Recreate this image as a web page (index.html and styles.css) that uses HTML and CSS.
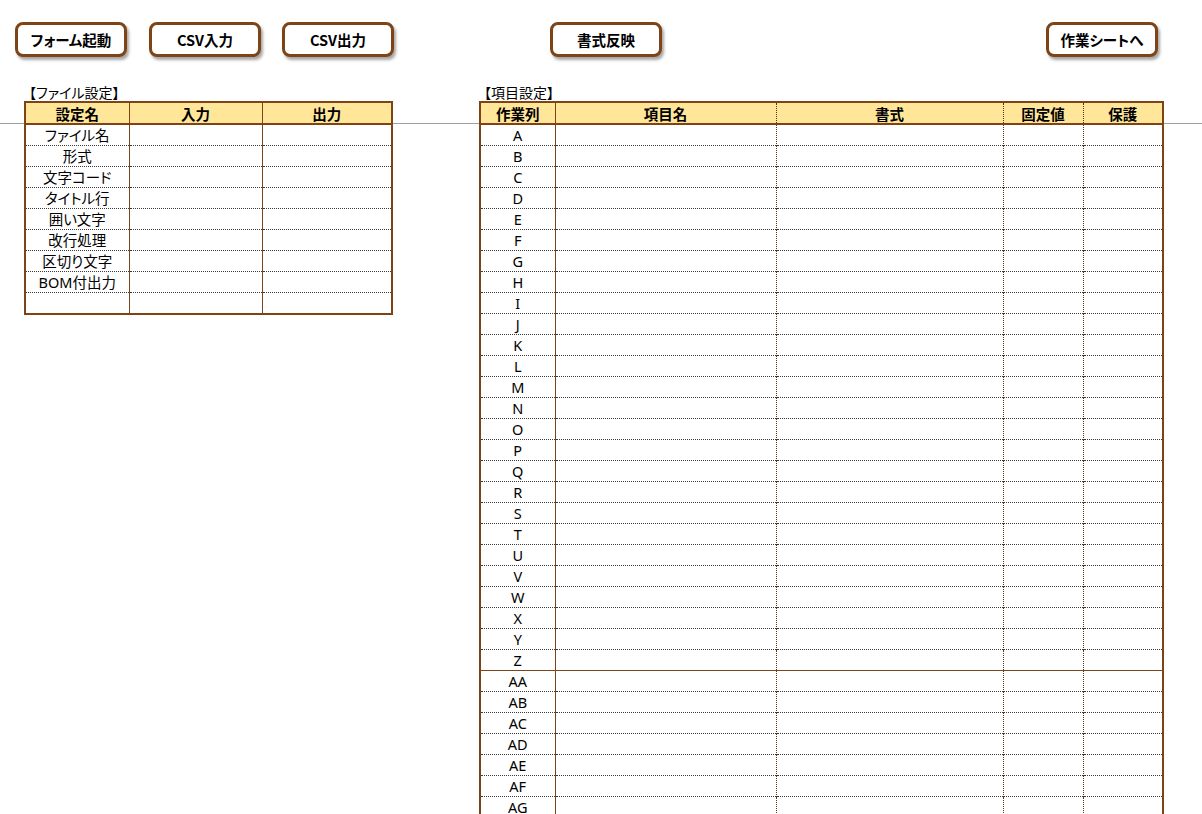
FILE: index.html
```html
<!DOCTYPE html>
<html lang="ja">
<head>
    <meta charset="UTF-8">
    <meta name="viewport" content="width=device-width, initial-scale=1.0">
    <title>CSV設定</title>
    <link rel="stylesheet" href="styles.css">
</head>
<body>
    <div class="toolbar">
        <div class="sheet-button">フォーム起動</div>
        <div class="sheet-button csv-in">CSV入力</div>
        <div class="sheet-button csv-out">CSV出力</div>
        <div class="sheet-button apply">書式反映</div>
        <div class="sheet-button work">作業シートへ</div>
    </div>

    <div class="sheet">
        <div class="block">
            <div class="caption">【ファイル設定】</div>
            <table class="grid file-table">
                <colgroup>
                    <col class="c-name">
                    <col class="c-in">
                    <col class="c-out">
                </colgroup>
                <tr><th>設定名</th><th class="solid">入力</th><th class="solid">出力</th></tr>
                <tr><td>ファイル名</td><td class="solid"></td><td class="solid"></td></tr>
                <tr><td>形式</td><td class="solid"></td><td class="solid"></td></tr>
                <tr><td>文字コード</td><td class="solid"></td><td class="solid"></td></tr>
                <tr><td>タイトル行</td><td class="solid"></td><td class="solid"></td></tr>
                <tr><td>囲い文字</td><td class="solid"></td><td class="solid"></td></tr>
                <tr><td>改行処理</td><td class="solid"></td><td class="solid"></td></tr>
                <tr><td>区切り文字</td><td class="solid"></td><td class="solid"></td></tr>
                <tr><td>BOM付出力</td><td class="solid"></td><td class="solid"></td></tr>
                <tr><td></td><td class="solid"></td><td class="solid"></td></tr>
            </table>
        </div>

        <div class="block">
            <div class="caption">【項目設定】</div>
            <table class="grid item-table">
                <colgroup>
                    <col class="c-col">
                    <col class="c-item">
                    <col class="c-format">
                    <col class="c-fixed">
                    <col class="c-lock">
                </colgroup>
                <tr><th>作業列</th><th class="solid">項目名</th><th class="dot">書式</th><th class="dot">固定値</th><th class="dot">保護</th></tr>
                <tr><td>A</td><td class="solid"></td><td class="dot"></td><td class="dot"></td><td class="dot"></td></tr>
                <tr><td>B</td><td class="solid"></td><td class="dot"></td><td class="dot"></td><td class="dot"></td></tr>
                <tr><td>C</td><td class="solid"></td><td class="dot"></td><td class="dot"></td><td class="dot"></td></tr>
                <tr><td>D</td><td class="solid"></td><td class="dot"></td><td class="dot"></td><td class="dot"></td></tr>
                <tr><td>E</td><td class="solid"></td><td class="dot"></td><td class="dot"></td><td class="dot"></td></tr>
                <tr><td>F</td><td class="solid"></td><td class="dot"></td><td class="dot"></td><td class="dot"></td></tr>
                <tr><td>G</td><td class="solid"></td><td class="dot"></td><td class="dot"></td><td class="dot"></td></tr>
                <tr><td>H</td><td class="solid"></td><td class="dot"></td><td class="dot"></td><td class="dot"></td></tr>
                <tr><td>I</td><td class="solid"></td><td class="dot"></td><td class="dot"></td><td class="dot"></td></tr>
                <tr><td>J</td><td class="solid"></td><td class="dot"></td><td class="dot"></td><td class="dot"></td></tr>
                <tr><td>K</td><td class="solid"></td><td class="dot"></td><td class="dot"></td><td class="dot"></td></tr>
                <tr><td>L</td><td class="solid"></td><td class="dot"></td><td class="dot"></td><td class="dot"></td></tr>
                <tr><td>M</td><td class="solid"></td><td class="dot"></td><td class="dot"></td><td class="dot"></td></tr>
                <tr><td>N</td><td class="solid"></td><td class="dot"></td><td class="dot"></td><td class="dot"></td></tr>
                <tr><td>O</td><td class="solid"></td><td class="dot"></td><td class="dot"></td><td class="dot"></td></tr>
                <tr><td>P</td><td class="solid"></td><td class="dot"></td><td class="dot"></td><td class="dot"></td></tr>
                <tr><td>Q</td><td class="solid"></td><td class="dot"></td><td class="dot"></td><td class="dot"></td></tr>
                <tr><td>R</td><td class="solid"></td><td class="dot"></td><td class="dot"></td><td class="dot"></td></tr>
                <tr><td>S</td><td class="solid"></td><td class="dot"></td><td class="dot"></td><td class="dot"></td></tr>
                <tr><td>T</td><td class="solid"></td><td class="dot"></td><td class="dot"></td><td class="dot"></td></tr>
                <tr><td>U</td><td class="solid"></td><td class="dot"></td><td class="dot"></td><td class="dot"></td></tr>
                <tr><td>V</td><td class="solid"></td><td class="dot"></td><td class="dot"></td><td class="dot"></td></tr>
                <tr><td>W</td><td class="solid"></td><td class="dot"></td><td class="dot"></td><td class="dot"></td></tr>
                <tr><td>X</td><td class="solid"></td><td class="dot"></td><td class="dot"></td><td class="dot"></td></tr>
                <tr><td>Y</td><td class="solid"></td><td class="dot"></td><td class="dot"></td><td class="dot"></td></tr>
                <tr><td>Z</td><td class="solid"></td><td class="dot"></td><td class="dot"></td><td class="dot"></td></tr>
                <tr class="group-start"><td>AA</td><td class="solid"></td><td class="dot"></td><td class="dot"></td><td class="dot"></td></tr>
                <tr><td>AB</td><td class="solid"></td><td class="dot"></td><td class="dot"></td><td class="dot"></td></tr>
                <tr><td>AC</td><td class="solid"></td><td class="dot"></td><td class="dot"></td><td class="dot"></td></tr>
                <tr><td>AD</td><td class="solid"></td><td class="dot"></td><td class="dot"></td><td class="dot"></td></tr>
                <tr><td>AE</td><td class="solid"></td><td class="dot"></td><td class="dot"></td><td class="dot"></td></tr>
                <tr><td>AF</td><td class="solid"></td><td class="dot"></td><td class="dot"></td><td class="dot"></td></tr>
                <tr><td>AG</td><td class="solid"></td><td class="dot"></td><td class="dot"></td><td class="dot"></td></tr>
            </table>
        </div>
    </div>
</body>
</html>
```

FILE: styles.css
```css
html, body {
    overflow: hidden;
}
body {
    margin: 0;
    font-family: "Noto Sans", "Noto Sans CJK JP", sans-serif;
    font-size: 15px;
    color: #000000;
    font-feature-settings: "palt";
    /* frozen pane divider */
    background: #ffffff linear-gradient(#a0a0a0, #a0a0a0) 0 123px / 100% 1px no-repeat;
}
.toolbar {
    display: flex;
    padding: 22px 0 0 15px;
}
.sheet-button {
    width: 112px;
    height: 35px;
    box-sizing: border-box;
    border: 3px solid #7e4416;
    border-radius: 8px;
    background: #ffffff;
    box-shadow: 2px 3px 3px rgba(0, 0, 0, 0.35);
    display: flex;
    align-items: center;
    justify-content: center;
    font-family: "Noto Sans CJK JP", sans-serif;
    font-weight: bold;
    font-size: 14.5px;
}
.csv-in { margin-left: 22px; }
.csv-out { margin-left: 21px; }
.apply { margin-left: 156px; }
.work { margin-left: 384px; }
.sheet {
    display: flex;
    align-items: flex-start;
    padding: 26px 0 0 24px;
    gap: 86px;
}
.caption {
    font-family: "Noto Sans CJK JP", sans-serif;
    font-size: 14px;
    line-height: 18px;
    height: 18px;
    padding-left: 5px;
}
.grid {
    border-collapse: collapse;
    table-layout: fixed;
    border: 2px solid #7e4416;
    background: #ffffff;
}
.grid th {
    background: #ffe699;
    font-family: "Noto Sans CJK JP", sans-serif;
    font-weight: bold;
    font-size: 14.5px;
    height: 20px;
    line-height: 19px;
    padding: 0;
    border-bottom: 2px solid #7e4416;
}
.grid td {
    height: 20px;
    line-height: 19px;
    padding: 0;
    text-align: center;
    font-size: 14.5px;
    border-top: 1px dotted #3a3a3a;
}
.grid .solid {
    border-left: 1px solid #7e4416;
}
.grid .dot {
    border-left: 1px dotted #5a3512;
}
.grid .group-start td {
    border-top: 1px solid #7e4416;
}
.file-table {
    width: 367px;
}
.c-name { width: 104px; }
.c-in { width: 133px; }
.c-out { width: 130px; }
.item-table {
    width: 683px;
}
.c-col { width: 75px; }
.c-item { width: 221px; }
.c-format { width: 227px; }
.c-fixed { width: 80px; }
.c-lock { width: 80px; }
```
